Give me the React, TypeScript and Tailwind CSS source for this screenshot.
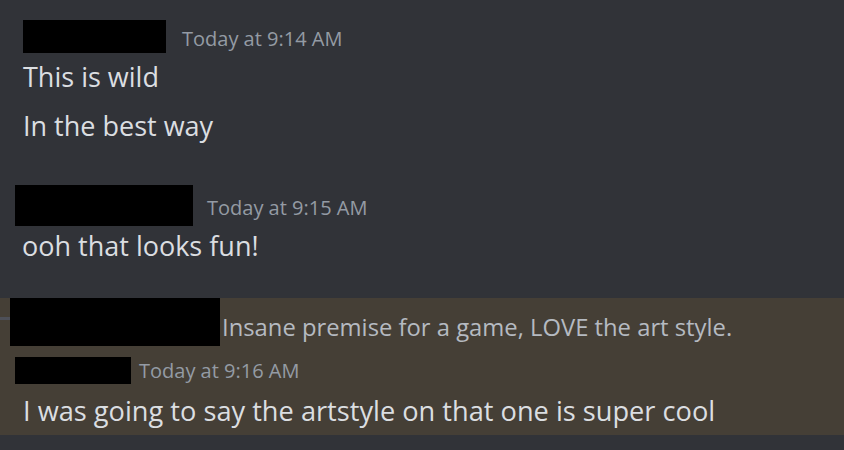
const font = { fontFamily: '"Open Sans", "Noto Sans", sans-serif' };

function Redacted({ className }: { className: string }) {
  return <div className={`shrink-0 bg-black ${className}`} />;
}

export default function App() {
  return (
    <div className="w-[844px] h-[450px] overflow-hidden bg-[#313338] text-[#dbdee1]" style={font}>
      {/* first group */}
      <div className="pt-[20px]">
        <div className="flex items-start h-[33px] pl-[23px]">
          <Redacted className="w-[143px] h-[33px]" />
          <span className="ml-[16px] text-[20px] leading-[38px] text-[#949ba4] whitespace-nowrap">Today at 9:14 AM</span>
        </div>
        <p className="mt-[6px] pl-[23px] text-[27px] leading-[36px]">This is wild</p>
        <p className="mt-[13px] pl-[23px] text-[27px] leading-[36px]">In the best way</p>
      </div>

      {/* second group */}
      <div className="mt-[41px]">
        <div className="flex items-start h-[41px] pl-[15px]">
          <Redacted className="w-[178px] h-[41px]" />
          <span className="ml-[14px] text-[20px] leading-[46px] text-[#949ba4] whitespace-nowrap">Today at 9:15 AM</span>
        </div>
        <p className="mt-[2px] pl-[22px] text-[27px] leading-[36px]">ooh that looks fun!</p>
      </div>

      {/* highlighted reply */}
      <div className="relative mt-[39px] bg-[#453f36] pb-[6px]">
        <div className="absolute left-0 top-[19px] w-[10px] h-[3px] bg-[#4e5058]" />
        <div className="flex items-start h-[48px] -mt-[5px] pl-[10px]">
          <Redacted className="w-[210px] h-[48px] relative" />
          <span className="ml-[2px] text-[23.8px] leading-[59px] text-[#b5bac1] whitespace-nowrap">
            Insane premise for a game, LOVE the art style.
          </span>
        </div>
        <div className="flex items-start h-[27px] mt-[11px] pl-[15px]">
          <Redacted className="w-[116px] h-[27px]" />
          <span className="ml-[8px] text-[20px] leading-[28px] text-[#949ba4] whitespace-nowrap">Today at 9:16 AM</span>
        </div>
        <p className="mt-[9px] pl-[23px] text-[27.2px] leading-[36px] whitespace-nowrap">
          I was going to say the artstyle on that one is super cool
        </p>
      </div>
    </div>
  );
}
